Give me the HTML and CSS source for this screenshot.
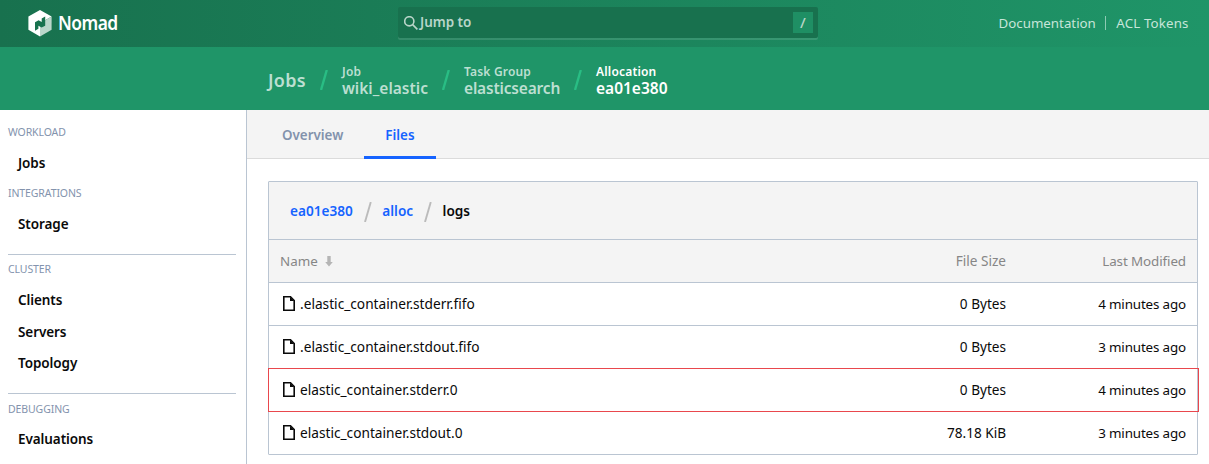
FILE: index.html
```html
<!DOCTYPE html>
<html lang="en">
<head>
<meta charset="utf-8">
<title>Nomad</title>
<link rel="stylesheet" href="styles.css">
</head>
<body>
<header class="navbar">
  <a class="brand">
    <svg class="brand-mark" width="24" height="27" viewBox="0 0 24 27">
      <path class="face-light" d="M12 0 23.6 6.6 12 13.2v13.2L.4 19.8V6.6z"/>
      <path class="face-shade" d="M23.6 6.6v13.2L12 26.4V13.2z"/>
      <path class="letter" d="M7 12.2 10.6 10.2 13.7 12V8.4L17.2 6.6v9.2L13.6 17.6 10.4 15.8v3L7 20.8z"/>
    </svg>
    <span class="brand-name">Nomad</span>
  </a>
  <div class="search">
    <svg class="search-icon" width="14" height="14" viewBox="0 0 14 14"><circle cx="5.3" cy="5.3" r="4.6"/><path d="M8.6 8.6 13.4 13.4"/></svg>
    <span class="search-text">Jump to</span>
    <kbd class="search-key">/</kbd>
  </div>
  <nav class="links"><a>Documentation</a><a class="split">ACL Tokens</a></nav>
</header>
<div class="subnav">
  <a class="crumb root">Jobs</a>
  <svg class="slash" width="8" height="20" viewBox="0 0 8 20"><path d="M1 20 6.8 0"/></svg>
  <a class="crumb c-job"><small>Job</small><span>wiki_elastic</span></a>
  <svg class="slash" width="8" height="20" viewBox="0 0 8 20"><path d="M1 20 6.8 0"/></svg>
  <a class="crumb c-group"><small>Task Group</small><span class="snug">elasticsearch</span></a>
  <svg class="slash" width="8" height="20" viewBox="0 0 8 20"><path d="M1 20 6.8 0"/></svg>
  <a class="crumb current"><small>Allocation</small><span>ea01e380</span></a>
</div>
<div class="page">
  <aside class="menu">
    <section><h2>WORKLOAD</h2><a>Jobs</a></section>
    <section class="plain"><h2>INTEGRATIONS</h2><a>Storage</a></section>
    <section class="ruled"><h2>CLUSTER</h2><a>Clients</a><a>Servers</a><a>Topology</a></section>
    <section class="ruled last"><h2>DEBUGGING</h2><a>Evaluations</a></section>
  </aside>
  <main class="content">
    <nav class="tabs"><a class="tab">Overview</a><a class="tab active">Files</a></nav>
    <div class="explorer">
      <div class="path">
        <a>ea01e380</a>
        <svg class="path-slash" width="8" height="20" viewBox="0 0 8 20"><path d="M1 20 6.8 0"/></svg>
        <a>alloc</a>
        <svg class="path-slash" width="8" height="20" viewBox="0 0 8 20"><path d="M1 20 6.8 0"/></svg>
        <span>logs</span>
      </div>
      <div class="row head"><span class="name">Name<svg class="sort" width="8" height="11" viewBox="0 0 8 11"><path d="M2.3 0h3.4v6H7.8L4 10.5.2 6h2.1z"/></svg></span><span class="size">File Size</span><span class="time">Last Modified</span></div>
      <div class="row"><span class="name"><svg class="file" width="12" height="15" viewBox="0 0 12 15"><path d="M.8.8h6.7l3.7 3.7v9.7H.8z"/><path class="fold" d="M7 .8v4.2h4.2z"/></svg>.elastic_container.stderr.fifo</span><span class="size">0 Bytes</span><span class="time">4 minutes ago</span></div>
      <div class="row"><span class="name"><svg class="file" width="12" height="15" viewBox="0 0 12 15"><path d="M.8.8h6.7l3.7 3.7v9.7H.8z"/><path class="fold" d="M7 .8v4.2h4.2z"/></svg>.elastic_container.stdout.fifo</span><span class="size">0 Bytes</span><span class="time">3 minutes ago</span></div>
      <div class="row marked"><span class="name"><svg class="file" width="12" height="15" viewBox="0 0 12 15"><path d="M.8.8h6.7l3.7 3.7v9.7H.8z"/><path class="fold" d="M7 .8v4.2h4.2z"/></svg>elastic_container.stderr.0</span><span class="size">0 Bytes</span><span class="time">4 minutes ago</span></div>
      <div class="row"><span class="name"><svg class="file" width="12" height="15" viewBox="0 0 12 15"><path d="M.8.8h6.7l3.7 3.7v9.7H.8z"/><path class="fold" d="M7 .8v4.2h4.2z"/></svg>elastic_container.stdout.0</span><span class="size">78.18 KiB</span><span class="time">3 minutes ago</span></div>
    </div>
  </main>
</div>
</body>
</html>
```
FILE: styles.css
```css
* { box-sizing: border-box; }
body {
  margin: 0;
  height: 464px;
  overflow: hidden;
  background: #fff;
  color: #0a0a0a;
  font: 14px/21px "Noto Sans", sans-serif;
}
svg { display: block; flex: none; }
.navbar {
  height: 47px;
  display: grid;
  grid-template-columns: 398px 420px 1fr;
  background: linear-gradient(to right, #18714e, #1f9568);
}
.brand { display: flex; align-items: center; padding: 0 0 1px 27.5px; color: #fff; }
.face-light { fill: #fff; }
.face-shade { fill: #bad6ca; }
.letter { fill: #18724e; }
.brand-name {
  margin-left: 6px;
  font: 600 20px/24px "Noto Sans", sans-serif;
  letter-spacing: -0.6px;
  transform: scaleX(0.87);
  transform-origin: left;
}
.search {
  height: 31px;
  margin-top: 7px;
  padding: 0 5px 0 6px;
  display: flex;
  align-items: center;
  background: #18714e;
  border-radius: 2px;
  box-shadow: 0 2px 0 rgba(255, 255, 255, 0.12);
  color: #b9d5c9;
}
.search-icon { fill: none; stroke: currentColor; stroke-width: 1.6; }
.search-text { flex: 1; margin-left: 2px; font-size: 13.5px; font-weight: 600; letter-spacing: -0.02px; }
.search-key {
  width: 20px;
  height: 21px;
  background: #1f8f64;
  text-align: center;
  font: 500 15px/20px "Noto Sans", sans-serif;
}
.links { display: flex; justify-content: flex-end; align-items: center; padding: 0 20.5px 1px 0; color: #c7e5d9; font-size: 13.3px; }
.links a { line-height: 14px; }
.split { margin-left: 9.5px; padding-left: 10px; border-left: 1px solid #8dcab3; letter-spacing: 0.14px; }
.subnav { height: 63px; display: flex; align-items: center; padding: 3px 0 0 268px; background: #1f9568; color: #bcdfd1; font-weight: 600; }
.root { font-size: 18px; width: 52px; letter-spacing: 0.3px; }
.slash { margin-right: 14px; fill: none; stroke: #29bd84; stroke-width: 2.4; }
.crumb { display: flex; flex-direction: column; }
.crumb small { font-size: 12px; line-height: 16px; letter-spacing: 0.18px; }
.crumb span { font-size: 15.5px; line-height: 16px; }
.crumb .snug { letter-spacing: -0.18px; }
.c-job { width: 100px; }
.c-group { width: 110px; }
.current { color: #fff; }
.page { display: grid; grid-template-columns: 247px 1fr; height: 354px; }
.menu { padding: 14px 10px 0 8px; border-right: 1px solid #bac5d2; }
.menu section { height: 61px; }
.menu h2 { margin: 0 0 15px; font-size: 10.5px; line-height: 16px; font-weight: 400; color: #8393ad; letter-spacing: -0.1px; }
.menu a { display: block; height: 31.5px; line-height: 21px; margin-top: -2px; padding-left: 10px; font-size: 13.5px; font-weight: 600; letter-spacing: -0.08px; }
.menu a + a { margin-top: 0; }
.menu .plain { height: 69px; }
.menu .ruled { height: 139px; border-top: 1px solid #bac5d2; padding-top: 6px; }
.menu .last { height: 71px; padding-top: 7px; }
.menu .last h2 { margin-bottom: 14px; }
.tabs { height: 49px; display: flex; padding-left: 14px; background: #f4f4f4; border-bottom: 1px solid #dbdbdb; }
.tab { height: 49px; padding: 15px 21px 10px; font-size: 13.4px; font-weight: 600; color: #8292ac; }
.tab.active { color: #1563ff; border-bottom: 3px solid #1563ff; width: 72px; }
.explorer { width: 930px; height: 274px; margin: 22px 0 0 21px; border: 1px solid #bac5d2; border-radius: 1px; }
.path { height: 57px; display: flex; align-items: center; padding-left: 21px; padding-top: 2px; background: #f4f4f4; font-size: 13.6px; font-weight: 600; }
.path > a, .path > span { padding-bottom: 2px; }
.path a { color: #1563ff; }
.path-slash { margin: 0 10.5px 0 11px; fill: none; stroke: #bbb; stroke-width: 1.9; }
.row {
  height: 43px;
  display: grid;
  grid-template-columns: 1fr 200px 180px;
  align-items: center;
  padding: 0 11px 1px 0;
  border-top: 1px solid #bac5d2;
  text-align: right;
}
.name { display: flex; align-items: center; padding-left: 14px; font-size: 13.7px; }
.size { font-size: 13.6px; }
.time { padding-top: 1px; font-size: 13.4px; letter-spacing: -0.15px; }
.head { background: #f4f4f4; color: #868686; }
.head .name { padding: 1px 0 0 11px; font-size: 13.4px; }
.head .time { letter-spacing: -0.1px; }
.sort { margin: 1px 0 0 7px; fill: #b5b5b5; }
.file { margin: 0 5px 0 0; fill: none; stroke: #0a0a0a; stroke-width: 1.6; }
.file .fold { fill: #0a0a0a; stroke: none; }
.marked { height: 44px; margin: 0 -2px -1px -1px; padding: 0 12px 1px 0; border: 1px solid #e9474d; position: relative; }
```
